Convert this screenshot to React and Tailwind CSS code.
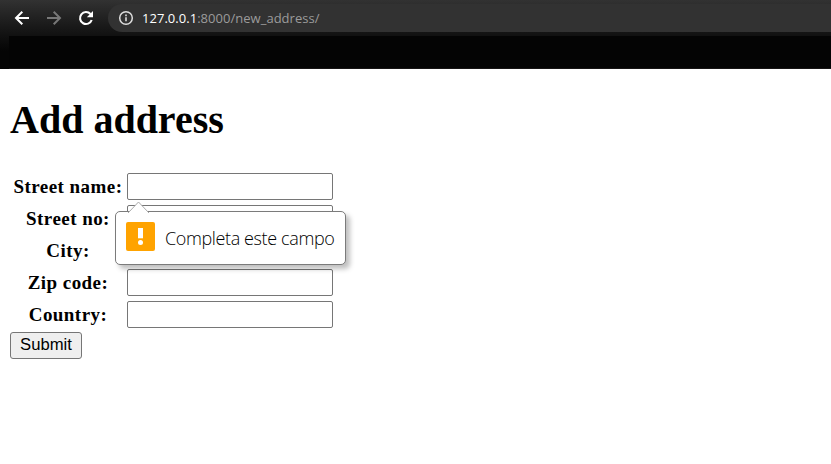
const fields = [
  { label: "Street name:", name: "street_name" },
  { label: "Street no:", name: "street_no" },
  { label: "City:", name: "city" },
  { label: "Zip code:", name: "zip_code" },
  { label: "Country:", name: "country" },
];

function BackIcon() {
  return (
    <svg className="h-5 w-5 text-white" viewBox="0 0 20 20" fill="none" stroke="currentColor" strokeWidth="2">
      <path d="M17 10H4M10.3 3.7 4 10l6.3 6.3" />
    </svg>
  );
}

function ForwardIcon() {
  return (
    <svg className="h-5 w-5 text-[#777777]" viewBox="0 0 20 20" fill="none" stroke="currentColor" strokeWidth="2">
      <path d="M3 10h13M9.7 3.7 16 10l-6.3 6.3" />
    </svg>
  );
}

function ReloadIcon() {
  return (
    <svg className="h-5 w-5 text-white" viewBox="0 0 20 20">
      <path d="M15.7 12A6 6 0 1 1 14.5 6" fill="none" stroke="currentColor" strokeWidth="2.1" />
      <path d="M17 3v6.2h-6.2z" fill="currentColor" />
    </svg>
  );
}

function InfoIcon() {
  return (
    <svg className="h-4 w-4 text-[#dddddd]" viewBox="0 0 16 16" fill="none" stroke="currentColor">
      <circle cx="8" cy="8" r="6.3" strokeWidth="1.5" />
      <path d="M8 7.2v4M8 4.6v1.6" strokeWidth="1.6" />
    </svg>
  );
}

function Toolbar() {
  return (
    <header className="h-[69px] bg-linear-to-b from-[#323232] from-0% to-[#050505] to-75%">
      <div className="flex h-9 items-center">
        <div className="flex w-[108px] gap-3 pl-3">
          <BackIcon />
          <ForwardIcon />
          <ReloadIcon />
        </div>
        <div className="flex h-7 flex-1 items-center rounded-l-full bg-[#323232] pl-2.5">
          <InfoIcon />
          <span className="mt-px ml-2 whitespace-nowrap font-['Open_Sans',sans-serif] text-[13px] tracking-[0.03px] text-[#9b9b9b]">
            <span className="text-white">127.0.0.1</span>:8000/new_address/
          </span>
        </div>
      </div>
      <div className="ml-[9px] h-[33px] border-b border-[#171515] bg-[#040404]" />
    </header>
  );
}

function ValidationBubble() {
  return (
    <div className="absolute top-[41px] -left-[11px] z-10 flex h-[54px] w-[231px] items-center rounded-[5px] border border-[#7b7b7b] bg-white pl-2.5 shadow-[4px_4px_5px_rgba(0,0,0,0.25)]">
      <svg className="absolute -top-[11px] left-3 h-3 w-[21px]" viewBox="0 0 21 12">
        <path d="M0 12 10.5 1 21 12" fill="white" stroke="#aaaaaa" />
      </svg>
      <svg className="mb-1 h-[29px] w-[29px] shrink-0" viewBox="0 0 29 29">
        <rect width="29" height="29" rx="2" fill="#ffa300" />
        <path d="M12 6h5v10.3h-5z" fill="white" />
        <circle cx="14.5" cy="20.5" r="2.5" fill="white" />
      </svg>
      <span className="ml-2.5 whitespace-nowrap font-['Open_Sans',sans-serif] text-[18px] font-light tracking-[-0.38px] text-black">
        Completa este campo
      </span>
    </div>
  );
}

export default function App() {
  return (
    <div className="min-h-[464px] bg-white text-black">
      <Toolbar />
      <main className="px-2.5 pt-7 font-['Liberation_Serif',serif]">
        <h1 className="h-[46px] text-[40px] leading-[46px] font-bold">Add address</h1>
        <form className="mt-[27px]">
          {fields.map((field, i) => (
            <div key={field.name} className="flex h-8 items-center">
              <label htmlFor={field.name} className="w-[116px] pt-0.5 text-center text-[19px] leading-[30px] font-bold tracking-[0.45px] whitespace-nowrap">
                {field.label}
              </label>
              <div className="relative flex h-8 items-center pl-px">
                <input id={field.name} className="h-[27px] w-[206px] rounded-[2px] border border-[#767676] bg-white outline-none" />
                {i === 0 && <ValidationBubble />}
              </div>
            </div>
          ))}
          <button type="button" className="mt-0.5 block h-[27px] w-[72px] rounded-[3px] border border-[#767676] bg-[#efefef] pb-[3px] font-['Liberation_Sans',sans-serif] text-[16.67px] leading-[21px]">
            Submit
          </button>
        </form>
      </main>
    </div>
  );
}
